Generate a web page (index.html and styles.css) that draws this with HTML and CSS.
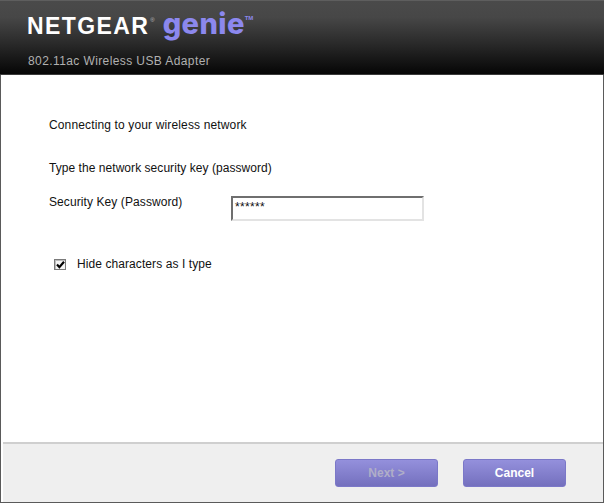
FILE: index.html
```html
<!DOCTYPE html>
<html lang="en">
<head>
<meta charset="utf-8">
<title>NETGEAR genie</title>
<link rel="stylesheet" href="styles.css">
</head>
<body>
<div class="window">
  <header class="header">
    <div class="logo">
      <span class="brand">NETGEAR</span><sup class="reg">®</sup>
      <span class="genie">genie</span><sup class="tm">TM</sup>
    </div>
    <div class="product">802.11ac Wireless USB Adapter</div>
  </header>
  <main class="content">
    <p class="line first">Connecting to your wireless network</p>
    <p class="line second">Type the network security key (password)</p>
    <div class="key-row">
      <label class="key-label" for="key">Security Key (Password)</label>
      <div class="key-input" id="key">******</div>
    </div>
    <div class="hide-row">
      <span class="checkbox">
        <svg width="9" height="8" viewBox="0 0 9 8"><path d="M1 3.6 L3.4 6.2 L8 .8" fill="none" stroke="#000" stroke-width="2.2"/></svg>
      </span>
      <span class="hide-label">Hide characters as I type</span>
    </div>
  </main>
  <footer class="footer">
    <button class="btn disabled" type="button">Next &gt;</button>
    <button class="btn" type="button">Cancel</button>
  </footer>
</div>
</body>
</html>
```
FILE: styles.css
```css
* { box-sizing: border-box; }
html, body { margin: 0; padding: 0; }
body { width: 604px; height: 503px; overflow: hidden; background: #fff; font-family: "Liberation Sans", Arial, sans-serif; }
.window {
  width: 604px; height: 503px; display: flex; flex-direction: column;
  border: 1px solid #5a5a5a; border-top: 0; background: #fff;
}
.header {
  height: 75px; flex: none; margin: 0 -1px; padding: 0 0 0 27px;
  background: linear-gradient(#4a4a4a 0, #474747 22%, #2a2a2a 58%, #0a0a0a 95%, #060606 100%);
  border-top: 1px solid #5e5e5e; border-bottom: 1px solid #3a3a3a;
  display: flex; flex-direction: column;
}
.logo { height: 43px; display: flex; align-items: flex-start; white-space: nowrap; }
.brand { margin-top: 14px; font-size: 23px; line-height: 22px; font-weight: 700; color: #fff; letter-spacing: 1.4px; }
.reg { margin: 16px 0 0 1px; font-size: 6px; line-height: 6px; color: #bbb; }
.genie { margin: 4px 0 0 8px; font-family: Inter, "Liberation Sans", sans-serif; font-size: 29px; line-height: 38px; font-weight: 800; color: #8c88ee; letter-spacing: 0.4px; }
.tm { margin: 14px 0 0 0; font-size: 6px; line-height: 6px; font-weight: 700; color: #8c88ee; }
.product { margin-top: 10px; padding-left: 1px; font-size: 12px; line-height: 14px; color: #b0b0b0; letter-spacing: 0.4px; }
.content { flex: 1; padding: 0 0 0 48px; font-size: 12px; color: #111; }
.line { margin: 0; font-size: 12px; line-height: 14px; }
.first { margin-top: 43px; letter-spacing: 0.14px; }
.second { margin-top: 29px; letter-spacing: 0.05px; }
.key-row { display: flex; align-items: flex-start; margin-top: 20px; }
.key-label { width: 182px; flex: none; font-size: 12px; line-height: 14px; letter-spacing: 0.09px; }
.key-input {
  width: 193px; height: 25px; margin-top: 1px; padding: 3px 0 0 2px;
  border: 2px solid #e3e3e3; border-top-color: #6f6f6f; border-left-color: #6f6f6f;
  font-size: 12px; line-height: 13px; letter-spacing: 0.33px;
}
.hide-row { display: flex; align-items: flex-start; margin-top: 36px; padding-left: 5px; }
.checkbox {
  width: 12px; height: 11px; margin-top: 2px; flex: none; border: 1px solid #7a7a7a; background: #f4f4f4;
  box-shadow: inset 1px 1px 0 #bdbdbd;
  display: flex; align-items: center; justify-content: center;
}
.hide-label { margin-left: 11px; font-size: 12px; line-height: 14px; letter-spacing: 0.08px; }
.footer {
  height: 60px; flex: none; margin: 0 0 0 2px; background: #efefef;
  border-top: 2px solid #cfcfcf;
  display: flex; justify-content: flex-end; align-items: flex-start; gap: 25px;
  padding: 15px 37px 0 0;
}
.btn {
  width: 103px; height: 28px; padding: 0; border: 1px solid #7b78c8; border-radius: 3px;
  background: linear-gradient(#9490dc, #7470be);
  font-family: "Liberation Sans", Arial, sans-serif; font-size: 12px; font-weight: 700; color: #fff;
}
.disabled { color: #b0aec8; }
```
